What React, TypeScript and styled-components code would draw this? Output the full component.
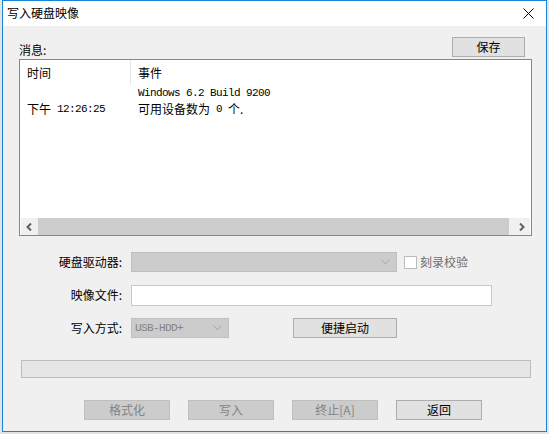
import React from 'react';
import styled, { createGlobalStyle } from 'styled-components';

const GlobalStyle = createGlobalStyle`
    html, body {
        margin: 0;
        padding: 0;
        background: #e4e4e4;
    }
    body {
        font-family: "Noto Sans CJK SC", "Liberation Sans", sans-serif;
        font-size: 12px;
        color: #000;
    }
`;

const SPage = styled.div`
    width: 549px;
    height: 434px;
    padding-left: 2px;
    box-sizing: border-box;
`;

const SWindow = styled.div`
    width: 545px;
    height: 432px;
    box-sizing: border-box;
    border: 1px solid #1883d7;
    background: #f0f0f0;
    display: flex;
    flex-direction: column;
`;

const STitleBar = styled.div`
    height: 25px;
    background: #fff;
    display: flex;
    align-items: center;
    padding: 0 12px 0 4px;
`;

const STitle = styled.span`
    font-size: 12px;
    line-height: 14px;
    margin-top: -1px;
`;

const SClose = styled.svg`
    margin-left: auto;
    width: 11px;
    height: 11px;
`;

const SBody = styled.div`
    padding: 11px 0 0 16px;
    display: flex;
    flex-direction: column;
`;

const SMessageHeader = styled.div`
    display: flex;
    align-items: flex-end;
    width: 506px;
    height: 20px;
`;

const SLabel = styled.span<{ $disabled?: boolean }>`
    font-size: 12px;
    line-height: 14px;
    color: ${({ $disabled }) => ($disabled ? '#6d6d6d' : '#000')};
    white-space: nowrap;
`;

const SButton = styled.button<{ $width: number; $disabled?: boolean }>`
    width: ${({ $width }) => $width}px;
    height: 20px;
    padding: 0;
    margin: 0;
    box-sizing: border-box;
    font-family: "Noto Sans CJK SC", "Liberation Sans", sans-serif;
    font-size: 12px;
    line-height: 16px;
    background: ${({ $disabled }) => ($disabled ? '#cccccc' : '#e1e1e1')};
    border: 1px solid ${({ $disabled }) => ($disabled ? '#bfbfbf' : '#adadad')};
    color: ${({ $disabled }) => ($disabled ? '#838383' : '#000')};
`;

const SSaveButton = styled(SButton)`
    margin-left: auto;
`;

const SListBox = styled.div`
    margin-top: 2px;
    width: 513px;
    height: 177px;
    box-sizing: border-box;
    border: 1px solid #828790;
    background: #fff;
    display: flex;
    flex-direction: column;
`;

const SListHead = styled.div`
    display: flex;
    height: 25px;
    align-items: stretch;
`;

const SCell = styled.div<{ $width?: number }>`
    width: ${({ $width }) => ($width ? `${$width}px` : 'auto')};
    flex: ${({ $width }) => ($width ? 'none' : '1')};
    padding-left: 7px;
    box-sizing: border-box;
    display: flex;
    align-items: center;
    white-space: nowrap;
    font-size: 12px;
    line-height: 16px;
`;

const SColSep = styled.div`
    width: 1px;
    background: #e5e5e5;
`;

const SRow = styled.div`
    display: flex;
    height: 16px;
`;

const SMono = styled.span`
    font-family: "Liberation Mono", "DejaVu Sans Mono", monospace;
    font-size: 11px;
    letter-spacing: -0.6px;
`;

const SGap = styled.span`
    display: inline-block;
    width: 6px;
`;

const SRows = styled.div`
    flex: 1;
`;

const SHScroll = styled.div`
    height: 17px;
    margin: 0 1px;
    background: #f0f0f0;
    display: flex;
    align-items: center;
`;

const SArrow = styled.div`
    width: 17px;
    height: 17px;
    display: grid;
    place-items: center;
`;

const SThumb = styled.div`
    height: 17px;
    width: 471px;
    background: #cdcdcd;
    margin-right: 4px;
`;

const SForm = styled.div`
    margin-top: 16px;
    display: flex;
    flex-direction: column;
    gap: 13px;
`;

const SFormRow = styled.div`
    display: flex;
    align-items: center;
    height: 20px;
`;

const SFieldLabel = styled(SLabel)`
    width: 103px;
    text-align: right;
    margin-right: 9px;
`;

const SCombo = styled.div<{ $width: number }>`
    width: ${({ $width }) => $width}px;
    height: 20px;
    box-sizing: border-box;
    background: #cccccc;
    border: 1px solid #bfbfbf;
    display: flex;
    align-items: center;
    padding: 0 6px 0 3px;
    color: #838383;
`;

const SComboArrow = styled.svg`
    margin-left: auto;
    width: 9px;
    height: 6px;
`;

const SCheck = styled.div`
    width: 13px;
    height: 13px;
    box-sizing: border-box;
    border: 1px solid #bcbcbc;
    background: #fff;
    margin: 0 3px 0 7px;
`;

const SInput = styled.div`
    width: 361px;
    height: 21px;
    box-sizing: border-box;
    background: #fff;
    border: 1px solid #c8c8c8;
`;

const SQuickButton = styled(SButton)`
    margin-left: 64px;
`;

const SProgress = styled.div`
    margin: 22px 0 0 2px;
    width: 510px;
    height: 18px;
    box-sizing: border-box;
    background: #e6e6e6;
    border: 1px solid #bcbcbc;
`;

const SActions = styled.div`
    margin: 22px 0 0 65px;
    display: flex;
    gap: 18px;
`;

const Chevron = ({ dir }: { dir: 'left' | 'right' }) => (
    <svg width="7" height="8" viewBox="0 0 7 8">
        <path
            d={dir === 'left' ? 'M5 0.5 L1.5 4 L5 7.5' : 'M2 0.5 L5.5 4 L2 7.5'}
            fill="none"
            stroke="#606060"
            strokeWidth="2"
        />
    </svg>
);

const ComboArrow = () => (
    <SComboArrow viewBox="0 0 9 6">
        <path d="M0.5 0.5 L4.5 5 L8.5 0.5" fill="none" stroke="#a6a6a6" strokeWidth="1" />
    </SComboArrow>
);

export default function App() {
    return (
        <>
            <GlobalStyle />
            <SPage>
                <SWindow>
                    <STitleBar>
                        <STitle>写入硬盘映像</STitle>
                        <SClose viewBox="0 0 11 11">
                            <path d="M0.5 0.5 L10.5 10.5 M10.5 0.5 L0.5 10.5" stroke="#000" strokeWidth="1" />
                        </SClose>
                    </STitleBar>
                    <SBody>
                        <SMessageHeader>
                            <SLabel>消息:</SLabel>
                            <SSaveButton $width={73}>保存</SSaveButton>
                        </SMessageHeader>
                        <SListBox>
                            <SListHead>
                                <SCell $width={110}>时间</SCell>
                                <SColSep />
                                <SCell>事件</SCell>
                            </SListHead>
                            <SRows>
                                <SRow>
                                    <SCell $width={111} />
                                    <SCell>
                                        <SMono>Windows 6.2 Build 9200</SMono>
                                    </SCell>
                                </SRow>
                                <SRow>
                                    <SCell $width={111}>
                                        下午<SGap />
                                        <SMono>12:26:25</SMono>
                                    </SCell>
                                    <SCell>
                                        可用设备数为<SGap />
                                        <SMono>0</SMono>
                                        <SGap />个.
                                    </SCell>
                                </SRow>
                            </SRows>
                            <SHScroll>
                                <SArrow>
                                    <Chevron dir="left" />
                                </SArrow>
                                <SThumb />
                                <SArrow>
                                    <Chevron dir="right" />
                                </SArrow>
                            </SHScroll>
                        </SListBox>
                        <SForm>
                            <SFormRow>
                                <SFieldLabel>硬盘驱动器:</SFieldLabel>
                                <SCombo $width={266}>
                                    <ComboArrow />
                                </SCombo>
                                <SCheck />
                                <SLabel $disabled>刻录校验</SLabel>
                            </SFormRow>
                            <SFormRow>
                                <SFieldLabel>映像文件:</SFieldLabel>
                                <SInput />
                            </SFormRow>
                            <SFormRow>
                                <SFieldLabel>写入方式:</SFieldLabel>
                                <SCombo $width={98}>
                                    <SMono>USB-HDD+</SMono>
                                    <ComboArrow />
                                </SCombo>
                                <SQuickButton $width={104}>便捷启动</SQuickButton>
                            </SFormRow>
                        </SForm>
                        <SProgress />
                        <SActions>
                            <SButton $width={86} $disabled>格式化</SButton>
                            <SButton $width={86} $disabled>写入</SButton>
                            <SButton $width={86} $disabled>终止[A]</SButton>
                            <SButton $width={86}>返回</SButton>
                        </SActions>
                    </SBody>
                </SWindow>
            </SPage>
        </>
    );
}
